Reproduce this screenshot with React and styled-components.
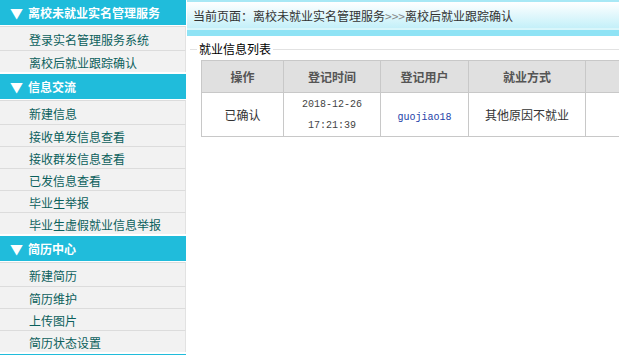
import React from "react";
import styled, { createGlobalStyle } from "styled-components";

const GlobalStyle = createGlobalStyle`
  html, body {
    margin: 0;
    padding: 0;
    background: #fff;
    overflow: hidden;
  }
  body {
    font-family: "Noto Sans CJK SC", "Noto Sans", sans-serif;
    font-size: 12px;
  }
`;

const menu = [
  { title: "离校未就业实名管理服务", items: ["登录实名管理服务系统", "离校后就业跟踪确认"] },
  {
    title: "信息交流",
    items: ["新建信息", "接收单发信息查看", "接收群发信息查看", "已发信息查看", "毕业生举报", "毕业生虚假就业信息举报"],
  },
  { title: "简历中心", items: ["新建简历", "简历维护", "上传图片", "简历状态设置"] },
  { title: "", items: [] },
];

const columns = [
  { label: "操作", width: 82 },
  { label: "登记时间", width: 97 },
  { label: "登记用户", width: 88 },
  { label: "就业方式", width: 117 },
  { label: "", width: 80 },
];

const App = () => (
  <Page>
    <GlobalStyle />
    <Sidebar>
      {menu.map((section, i) => (
        <Section key={i}>
          <SectionHead>
            {section.title && <Arrow>▼</Arrow>}
            {section.title}
          </SectionHead>
          {section.items.length > 0 && (
            <ItemList>
              {section.items.map((item) => (
                <Item key={item}>{item}</Item>
              ))}
            </ItemList>
          )}
        </Section>
      ))}
    </Sidebar>
    <Main>
      <Crumb>
        当前页面：离校未就业实名管理服务<CrumbSep>&gt;&gt;&gt;</CrumbSep>离校后就业跟踪确认
      </Crumb>
      <Box>
        <Legend>就业信息列表</Legend>
        <Table>
          <colgroup>
            {columns.map((c, i) => (
              <col key={i} style={{ width: c.width }} />
            ))}
          </colgroup>
          <thead>
            <tr>
              {columns.map((c, i) => (
                <Th key={i}>{c.label}</Th>
              ))}
            </tr>
          </thead>
          <tbody>
            <tr>
              <Td>已确认</Td>
              <Td>
                <Mono>2018-12-26</Mono>
                <Mono>17:21:39</Mono>
              </Td>
              <Td>
                <User>guojiao18</User>
              </Td>
              <Td>其他原因不就业</Td>
              <Td />
            </tr>
          </tbody>
        </Table>
      </Box>
    </Main>
  </Page>
);

export default App;

const Page = styled.div`
  display: flex;
  width: 619px;
  height: 355px;
  overflow: hidden;
`;

const Sidebar = styled.div`
  width: 186px;
  flex-shrink: 0;
  border-right: 1px solid #fff;
`;

const Section = styled.div``;

const SectionHead = styled.div`
  height: 25px;
  line-height: 25px;
  background: #20bcdb;
  color: #fff;
  font-weight: bold;
  padding-left: 10px;
  display: flex;
  align-items: center;
  gap: 5px;
`;

const Arrow = styled.span`
  font-size: 13px;
  width: 13px;
`;

const ItemList = styled.ul`
  list-style: none;
  margin: 0;
  padding: 1px 0 2px;
  background: #fff;
`;

const Item = styled.li`
  height: 21px;
  line-height: 23px;
  border-top: 1px solid #dcdcdc;
  border-right: 1px solid #e2e2e2;
  background: #f2f2f2;
  color: #0b5f5c;
  padding-left: 29px;
  white-space: nowrap;
  &:first-child {
    height: 23px;
    line-height: 26px;
  }
`;

const Main = styled.div`
  flex: 1;
  min-width: 0;
`;

const Crumb = styled.div`
  height: 26px;
  line-height: 28px;
  padding-left: 6px;
  color: #333;
  white-space: nowrap;
  border-top: 2px solid #a8e8f5;
  background: linear-gradient(#ffffff, #c4f0f9);
  border-bottom: 2px solid #d8f6fb;
  box-shadow: 0 6px 0 #8fe3f5;
  margin-bottom: 12px;
`;

const CrumbSep = styled.span`
  color: #888;
`;

const Box = styled.fieldset`
  margin: 0 0 0 3px;
  padding: 0 0 0 11px;
  border: none;
  border-top: 1px solid #e2e2e2;
  min-width: 0;
`;

const Legend = styled.legend`
  padding: 0 2px;
  margin-left: -4px;
  color: #000;
  line-height: 14px;
`;

const Table = styled.table`
  border-collapse: collapse;
  table-layout: fixed;
  width: 464px;
  margin-top: 4px;
`;

const Th = styled.th`
  height: 29px;
  background: #e0e0e0;
  border: 1px solid #c8c8c8;
  color: #555;
  font-weight: bold;
  text-align: center;
`;

const Td = styled.td`
  height: 43px;
  border: 1px solid #c8c8c8;
  color: #333;
  text-align: center;
  padding: 0;
`;

const Mono = styled.div`
  font-family: "Liberation Mono", "DejaVu Sans Mono", monospace;
  font-size: 10px;
  line-height: 21px;
  color: #444;
`;

const User = styled.span`
  font-family: "Liberation Mono", "DejaVu Sans Mono", monospace;
  font-size: 10px;
  color: #2443a8;
`;
